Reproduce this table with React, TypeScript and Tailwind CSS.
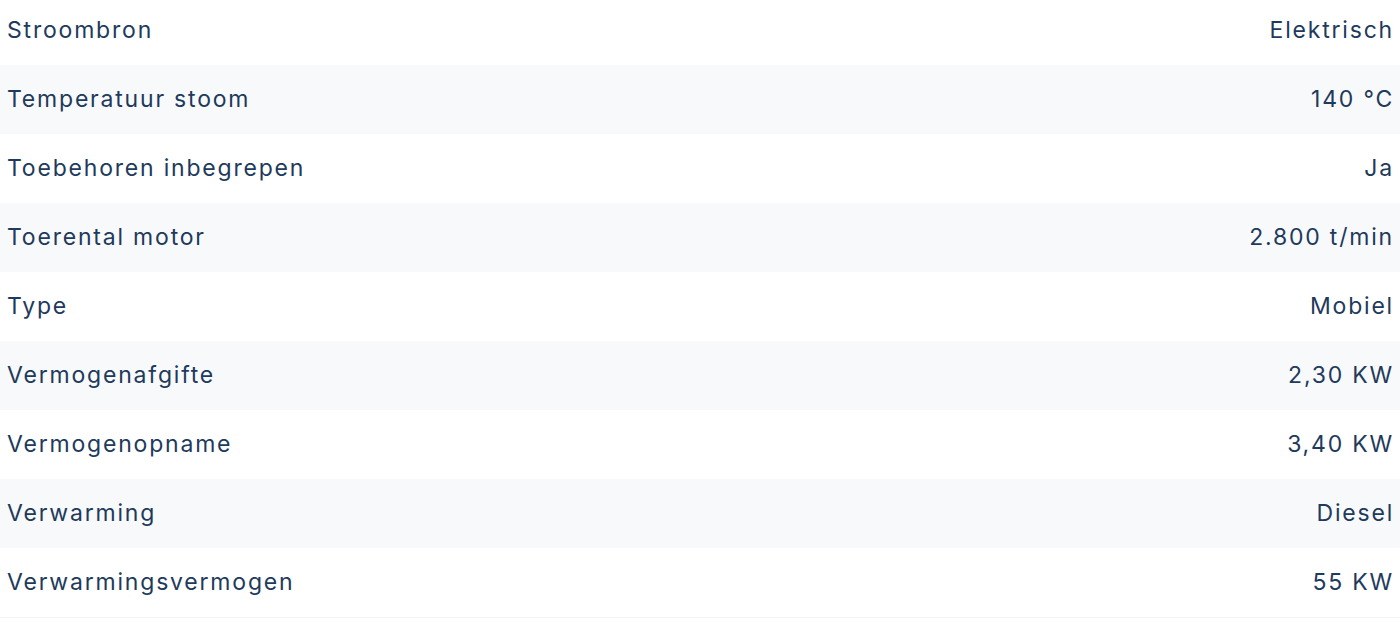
const rows: [string, string][] = [
  ["Stroombron", "Elektrisch"],
  ["Temperatuur stoom", "140 °C"],
  ["Toebehoren inbegrepen", "Ja"],
  ["Toerental motor", "2.800 t/min"],
  ["Type", "Mobiel"],
  ["Vermogenafgifte", "2,30 KW"],
  ["Vermogenopname", "3,40 KW"],
  ["Verwarming", "Diesel"],
  ["Verwarmingsvermogen", "55 KW"],
];

export default function App() {
  return (
    <div className="h-[618px] w-[1400px] overflow-hidden bg-white font-['Inter',sans-serif] text-[23px] tracking-[1.8px] text-[#1e3a5c]">
      <div className="-mt-[4px] border-b border-[#f1f2f4]">
        {rows.map(([k, v], i) => (
          <div
            key={k}
            className={`flex h-[69px] items-center justify-between pl-[7px] pr-[6px] ${i % 2 === 1 ? "bg-[#f8f9fa]" : "bg-white"}`}
          >
            <span>{k}</span>
            <span>{v}</span>
          </div>
        ))}
      </div>
    </div>
  );
}
